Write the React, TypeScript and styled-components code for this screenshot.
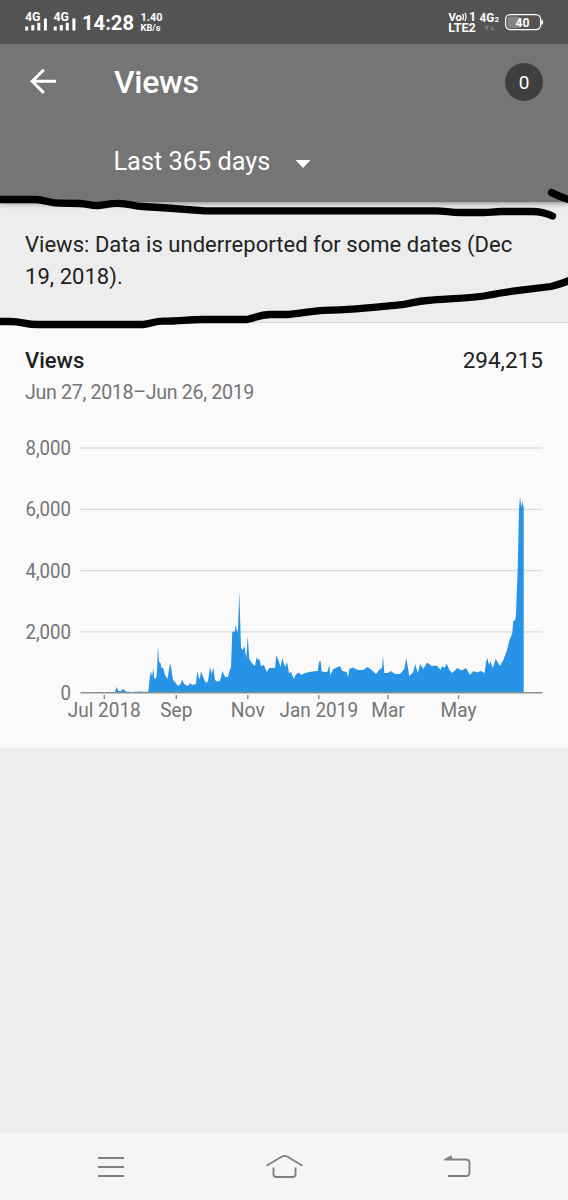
import React from "react";
import styled, { createGlobalStyle } from "styled-components";

const GlobalStyle = createGlobalStyle`
  * { box-sizing: border-box; }
  body { margin: 0; background: #eeeeee; font-family: Roboto, "Liberation Sans", sans-serif; }
`;

const Screen = styled.div`
  position: relative;
  width: 568px;
  height: 1200px;
  display: flex;
  flex-direction: column;
  background: #eeeeee;
  overflow: hidden;
`;

const StatusBar = styled.div`
  height: 44px;
  flex: none;
  background: #535353;
  z-index: 2;
`;

const StatusDrawing = styled.svg`
  display: block;
  width: 568px;
  height: 44px;
`;

const AppBar = styled.header`
  height: 158px;
  flex: none;
  padding: 18px 25px 0 29px;
  background: #757575;
  color: #fff;
  box-shadow: 0 1px 6px rgba(0, 0, 0, 0.45);
  z-index: 1;
`;

const TitleRow = styled.div`
  height: 40px;
  display: flex;
  align-items: center;
`;

const BackIcon = styled.svg`
  width: 28px;
  height: 28px;
  flex: none;
`;

const Title = styled.h1`
  flex: 1;
  margin: 0 0 0 57px;
  font-size: 32px;
  line-height: 41px;
  font-weight: 500;
  letter-spacing: -0.3px;
`;

const CountBadge = styled.div`
  width: 38px;
  height: 38px;
  border-radius: 50%;
  background: #3f3f3f;
  display: flex;
  align-items: center;
  justify-content: center;
  font-size: 19px;
  padding-top: 1px;
`;

const RangePicker = styled.div`
  display: flex;
  align-items: center;
  height: 40px;
  margin: 39.5px 0 0 84.5px;
  font-size: 25.3px;
`;

const Caret = styled.svg`
  width: 16px;
  height: 8px;
  margin: 5px 0 0 24.5px;
`;

const Notice = styled.p`
  height: 121px;
  flex: none;
  margin: 0;
  padding: 27px 25px 0;
  border-bottom: 1px solid #dadada;
  background: #ededed;
  color: #212121;
  font-size: 22px;
  line-height: 32px;
  letter-spacing: 0.03px;
  white-space: nowrap;
`;

const Card = styled.section`
  height: 425px;
  flex: none;
  padding-top: 21px;
  background: #fafafa;
`;

const CardHeader = styled.div`
  display: flex;
  justify-content: space-between;
  padding: 0 25px;
  font-size: 22.5px;
  line-height: 33px;
  color: #212121;
`;

const Metric = styled.span`
  font-weight: 500;
  font-size: 22px;
`;

const DateRange = styled.div`
  height: 53px;
  padding: 0 25px;
  font-size: 19.6px;
  letter-spacing: -0.32px;
  line-height: 32px;
  color: #757575;
`;

const Chart = styled.svg`
  display: block;
  width: 568px;
  height: 300px;
`;

const NavBar = styled.nav`
  height: 67px;
  flex: none;
  margin-top: auto;
  background: #f5f5f5;
`;

const Annotation = styled.svg`
  position: absolute;
  left: 0;
  top: 0;
  z-index: 2;
  pointer-events: none;
`;

const AREA =
  "80,692.5 100,692 115,692 116.5,687 118.5,691 121,691 123,688.7 126,691.5 132,692 140,691.5 148,692 148.7,688 150,676 151,671 152,677 153.2,668.5 154.5,679 156.3,678 157,670 157.9,646 159,662 160.5,663 161.5,668 163,667.5 165,675 167.5,679 168.6,672 170,662.7 171.5,670 173,680 175,682 178,686 180.5,684 182.3,679.5 184,684 188,686 190,683 192,685 196,684 197.2,671 199,679 200,678 201,671 203,677 206,683 208,681 210,667 211.5,674 213.2,667.5 215,680 217,681.5 220,681 222.6,671 225,677 228,677 229.5,671 231,667 232.3,631.5 234.5,632 235.7,625 237.3,633 238,629 239.3,591 241,648 242.7,650 244.3,646 246.3,658 247.7,636 249.3,659 251.7,663 255,666 256.7,657 258,660 259.3,658.5 261,666 264,665 266.7,672 269.3,668 275,668 276.3,655 278.3,660 280.7,667 282.3,658 285,667 287,662 289,673 291,672 294,679 295.5,675 298.3,672.5 301.7,675 305,673 309,672 313,671.5 317.7,671 319.3,661 320.7,661.5 321.7,671.5 327.3,672 329.3,665 330.3,675 333.3,669 340,666 342.3,671 346.7,672 348,677 349.3,669 353,667.5 358,670 363,670 367.7,667 371.7,670 376,674 380,669 382,668 383,656 384.3,673 388,673 390.7,671 395,674 400,674 404.3,669 406.3,658 409.3,676 413.3,672 415.3,664 417.7,673 420.3,664 423.3,669 427,662.5 431.7,666 436.7,665.5 440.7,670 442,666 444.7,668 446.7,663.5 449.3,670 452.3,673 457.3,668 461.7,670.5 466,668 470,675 473.3,671 477,672.5 480.7,671 484.7,673 486,662 487.3,658 489,665 490.3,661 492.7,668 495.7,659 500,666 503.3,660 506.7,651 509.3,641 512.3,633 513.3,621 515.3,620 516,613 517.7,570 519,510 520,496.5 521.3,507 522.3,501 523.7,508 523.7,692.5";

const TICKS = [
  { y: 448, label: "8,000", w: 45.5 },
  { y: 509.3, label: "6,000", w: 45.5 },
  { y: 570.7, label: "4,000", w: 45.5 },
  { y: 631.8, label: "2,000", w: 45.5 },
  { y: 692.7, label: "0", w: 10.5 },
];

const MONTHS = [
  { x: 104.3, label: "Jul 2018", w: 73 },
  { x: 176.3, label: "Sep", w: 32 },
  { x: 247.8, label: "Nov", w: 34 },
  { x: 318.8, label: "Jan 2019", w: 78.5 },
  { x: 388, label: "Mar", w: 33.5 },
  { x: 458.6, label: "May", w: 36 },
];

function Signal({ x }: { x: number }) {
  return (
    <g transform={`translate(${x} 0)`}>
      <text x="0" y="21.3" fontSize="12" fontWeight="700" textLength="15.5" lengthAdjust="spacingAndGlyphs">4G</text>
      <path d="M1.7 26.5V30.5M7.8 25V30.5M13.8 22.8V30.5M20.4 18.5V30.5" stroke="#fff" strokeWidth="3" />
    </g>
  );
}

function StatusIcons() {
  return (
    <StatusDrawing viewBox="0 0 568 44" fill="#fff" fontFamily="Roboto">
      <Signal x={25} />
      <Signal x={53.5} />
      <text x="82" y="30" fontSize="20.5" fontWeight="700" textLength="52" lengthAdjust="spacingAndGlyphs">14:28</text>
      <text x="140.5" y="21" fontSize="11" fontWeight="700" textLength="22" lengthAdjust="spacingAndGlyphs">1.40</text>
      <text x="140.5" y="30.5" fontSize="9.5" fontWeight="700" textLength="20" lengthAdjust="spacingAndGlyphs">KB/s</text>
      <text x="448.5" y="20.5" fontSize="10.5" fontWeight="700" textLength="13.5" lengthAdjust="spacingAndGlyphs">Vo</text>
      <path d="M462.5 13.7q2 3.2 0 6.4M464.8 12.8q2.6 4.1 0 8.2" fill="none" stroke="#fff" strokeWidth="1.2" />
      <text x="469" y="21" fontSize="12.5" fontWeight="700">1</text>
      <text x="448.3" y="32" fontSize="12" fontWeight="700" textLength="27.5" lengthAdjust="spacingAndGlyphs">LTE2</text>
      <text x="479.5" y="22.3" fontSize="13" fontWeight="700" textLength="14.8" lengthAdjust="spacingAndGlyphs">4G</text>
      <text x="494.7" y="22.3" fontSize="7.5" fontWeight="700">2</text>
      <path d="M484 25.5h5.500l-2.700 5zM489.500 30.500h5.500l-2.700-5z" fill="#777" />
      <rect x="507.5" y="16.5" width="13" height="11.5" rx="2.5" fill="#858585" />
      <rect x="505.6" y="14.6" width="35" height="15" rx="4.5" fill="none" stroke="#fff" strokeWidth="1.3" />
      <path d="M541.2 19.2q2 1 2 3t-2 3z" />
      <text x="515.5" y="26.5" fontSize="12" fontWeight="700" textLength="14" lengthAdjust="spacingAndGlyphs">40</text>
    </StatusDrawing>
  );
}

function ViewsChart() {
  return (
    <Chart viewBox="0 430 568 300" fontFamily="Roboto" fontSize="19.5" fill="#757575">
      {TICKS.map((t) => (
        <g key={t.label}>
          {t.y < 690 && <path d={`M80.5 ${t.y}H542.5`} stroke="#dcdcdc" strokeWidth="1.3" />}
          <text x={71 - t.w} y={t.y + 6.8} textLength={t.w} lengthAdjust="spacingAndGlyphs">{t.label}</text>
        </g>
      ))}
      <polygon points={AREA} fill="#2793e6" />
      <path d="M80.5 692.7H542.5" stroke="#8e8e8e" strokeWidth="1.4" />
      {MONTHS.map((m) => (
        <g key={m.label}>
          <path d={`M${m.x} 695V699`} stroke="#858585" strokeWidth="1.4" />
          <text x={m.x - m.w / 2} y="717" textLength={m.w} lengthAdjust="spacingAndGlyphs">{m.label}</text>
        </g>
      ))}
    </Chart>
  );
}

export default function App() {
  return (
    <Screen>
      <GlobalStyle />
      <StatusBar><StatusIcons /></StatusBar>
      <AppBar>
        <TitleRow>
          <BackIcon viewBox="0 0 28 28" fill="none" stroke="#fff" strokeWidth="3">
            <path d="M27 13.3H3.5M14.8 1.7L3.2 13.3L14.8 24.9" />
          </BackIcon>
          <Title>Views</Title>
          <CountBadge>0</CountBadge>
        </TitleRow>
        <RangePicker>
          Last 365 days
          <Caret viewBox="0 0 16 8"><path d="M.5 0h15L8 8z" fill="#fff" /></Caret>
        </RangePicker>
      </AppBar>
      <Notice>Views: Data is underreported for some dates (Dec<br />19, 2018).</Notice>
      <Card>
        <CardHeader><Metric>Views</Metric><span>294,215</span></CardHeader>
        <DateRange>Jun 27, 2018–Jun 26, 2019</DateRange>
        <ViewsChart />
      </Card>
      <NavBar>
        <svg width="568" height="67" viewBox="0 1133 568 67" fill="none" stroke="#808080" strokeWidth="1.9" strokeLinejoin="round">
          <path d="M98 1158H124M98 1167H124M98 1176H124" />
          <path d="M266.5 1165.8L281.5 1156.8Q284.5 1155 287.5 1156.8L302.5 1165.8M273.5 1167.5V1174Q273.5 1177 276.5 1177H292.5Q295.5 1177 295.5 1174V1167.5" />
          <path d="M448 1176H466Q469.5 1176 469.5 1172.5V1162.8Q469.5 1159.5 466 1159.5H445L451 1156.5V1159" />
        </svg>
      </NavBar>
      <Annotation width="568" height="400" fill="none" stroke="#000" strokeWidth="7.3" strokeLinecap="round" strokeLinejoin="round">
        <path d="M-5 199.5H36C44 199.5 49 203 59 203.2L80 203.5C88 204 91 205.7 98 205.5C106 205 109 203.3 117 203.3C129 203 133 206.5 143 206.5L167 208L205 210.8H436C445 210.8 450 212.5 461 212.5H484C491 212.5 493 211.5 501 211.5H532C541 211.5 546 213 552.5 216" />
        <path d="M551.5 192.5Q558 196 573 201" />
        <path d="M-5 321.5H10C22 321.5 26 324.5 37 324.5H143C152 323.5 155 321 164 321.2C180 321 189 319.5 203 319.5H247C255 318 260 314.8 270 314.5H288C302 313.5 311 310.8 324 310.3C361 309.5 382 306.5 404 304.3C413 303 417 301 427 300.5C454 298.5 468 298 484 296C500 293 505 292 517 290.7L551 286.5Q560 284.5 573 279" />
      </Annotation>
    </Screen>
  );
}
